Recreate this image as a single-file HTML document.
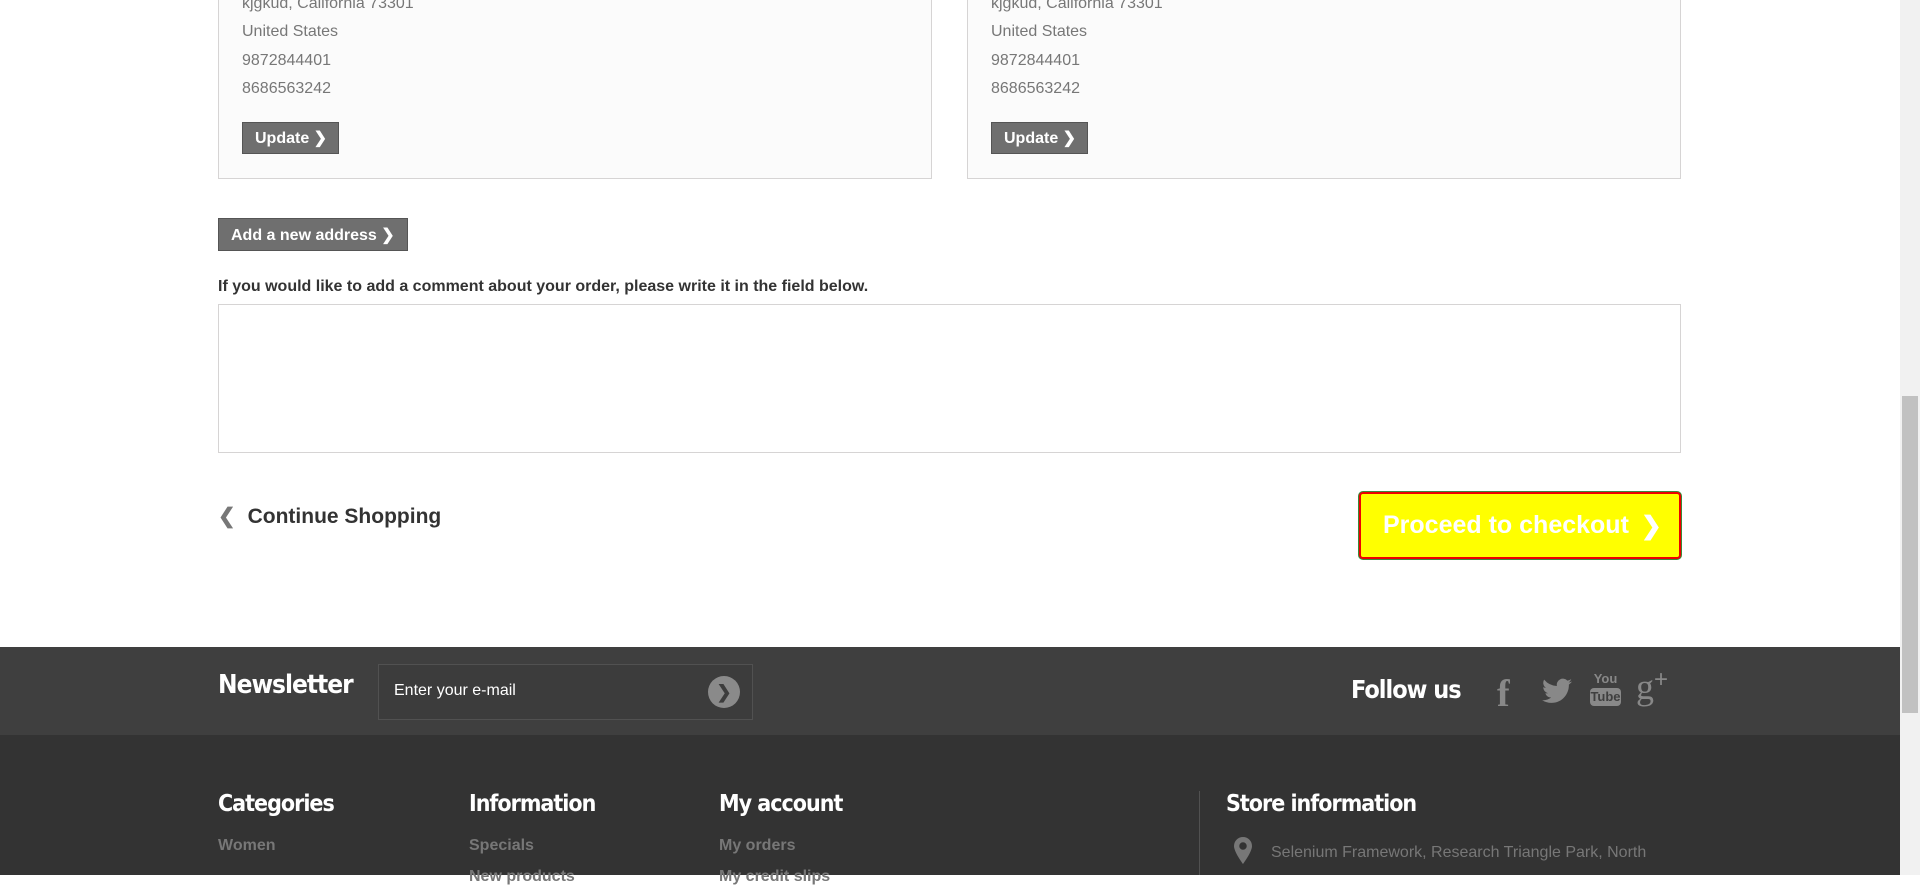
<!DOCTYPE html>
<html><head><meta charset="utf-8"><style>
*{margin:0;padding:0;box-sizing:border-box}
body{width:1920px;height:875px;overflow:hidden;background:#fff;font-family:"Liberation Sans",Arial,sans-serif;position:relative}
.a{position:absolute}
.box{position:absolute;top:-20px;height:199px;width:714px;background:#fbfbfb;border:1px solid #d6d4d4}
.box .t{position:absolute;left:23px;font-size:16px;color:#777}
.btn{position:absolute;background:#6f6f6f;border:1px solid #555;color:#fff;font-weight:bold;font-size:16px;display:flex;align-items:center;padding-left:12px}
.ft{font-family:"DejaVu Sans Condensed","Liberation Sans Narrow","Liberation Sans",sans-serif;color:#fff;font-weight:bold;letter-spacing:-1px}
.lnk{font-weight:bold;color:#777;font-size:16px}
</style></head><body>
<div class="box" style="left:218px">
 <div class="t" style="top:14px">kjgkud, California 73301</div>
 <div class="t" style="top:42px">United States</div>
 <div class="t" style="top:71px">9872844401</div>
 <div class="t" style="top:99px">8686563242</div>
 <div class="btn" style="left:23px;top:141px;width:97px;height:32px">Update &#x276F;</div>
</div>
<div class="box" style="left:967px">
 <div class="t" style="top:14px">kjgkud, California 73301</div>
 <div class="t" style="top:42px">United States</div>
 <div class="t" style="top:71px">9872844401</div>
 <div class="t" style="top:99px">8686563242</div>
 <div class="btn" style="left:23px;top:141px;width:97px;height:32px">Update &#x276F;</div>
</div>
<div class="btn" style="left:218px;top:218px;width:190px;height:33px">Add a new address &#x276F;</div>
<div class="a" style="left:218px;top:278px;font-size:16px;font-weight:bold;color:#333">If you would like to add a comment about your order, please write it in the field below.</div>
<div class="a" style="left:218px;top:304px;width:1463px;height:149px;border:1px solid #d6d4d4"></div>
<div class="a" style="left:218px;top:504px;font-size:21px;font-weight:bold;color:#333"><span style="color:#777;margin-right:12px">&#x276E;</span>Continue Shopping</div>
<div class="a" style="left:1359px;top:492px;width:322px;height:67px;background:#ff0;border:2px solid #e00;border-radius:4px;box-shadow:0 0 0 1px #3a8a3a;color:#fff;font-weight:bold;font-size:25px;display:flex;align-items:center;padding-left:22px">Proceed to checkout <span style="margin-left:12px">&#x276F;</span></div>

<div class="a" style="left:0;top:647px;width:1900px;height:88px;background:#3f3f3f"></div>
<div class="a" style="left:0;top:735px;width:1900px;height:140px;background:#333"></div>
<div class="a ft" style="left:218px;top:670px;font-size:26px">Newsletter</div>
<div class="a" style="left:378px;top:664px;width:375px;height:56px;background:#3c3c3c;border:1px solid #515151"></div>
<div class="a" style="left:394px;top:682px;font-size:16px;color:#fff">Enter your e-mail</div>
<div class="a" style="left:708px;top:676px;width:32px;height:32px;border-radius:50%;background:#8a8a8a;color:#3c3c3c;font-weight:bold;font-size:18px;text-align:center;line-height:32px">&#x276F;</div>
<div class="a ft" style="left:1351px;top:675px;font-size:25px">Follow us</div>
<div class="a" style="left:1497px;top:672px;font-size:38px;font-weight:bold;color:#888;font-family:'Liberation Serif',serif">f</div>
<svg class="a" style="left:1542px;top:678px" width="30" height="26" viewBox="0 0 24 20"><path fill="#888" d="M24 2.4c-.9.4-1.8.6-2.8.8 1-.6 1.8-1.6 2.2-2.7-1 .6-2 1-3.1 1.2A4.9 4.9 0 0 0 11.9 6 14 14 0 0 1 1.7.9a4.9 4.9 0 0 0 1.5 6.6c-.8 0-1.6-.3-2.200-.6 0 2.4 1.7 4.4 3.9 4.8-.7.2-1.5.2-2.2.1.6 2 2.4 3.4 4.6 3.4A9.9 9.9 0 0 1 0 17.3 14 14 0 0 0 7.5 19.5c9.1 0 14-7.5 14-14v-.6c1-.7 1.8-1.6 2.5-2.5z"/></svg>
<div class="a" style="left:1590px;top:672px;width:31px;height:36px;color:#888;font-size:13px;font-weight:bold;text-align:center;line-height:14px">You<div style="background:#888;color:#3f3f3f;border-radius:4px;margin-top:2px;height:18px;line-height:18px">Tube</div></div>
<div class="a" style="left:1636px;top:666px;font-size:36px;color:#888;font-family:'Liberation Serif',serif">g<span style="font-size:24px;vertical-align:top;font-family:'Liberation Sans'">+</span></div>

<div class="a ft" style="left:218px;top:791px;font-size:23px">Categories</div>
<div class="a ft" style="left:469px;top:791px;font-size:23px">Information</div>
<div class="a ft" style="left:719px;top:791px;font-size:23px">My account</div>
<div class="a ft" style="left:1226px;top:791px;font-size:23px">Store information</div>
<div class="a" style="left:1199px;top:791px;width:1px;height:84px;background:#515151"></div>
<div class="a lnk" style="left:218px;top:837px">Women</div>
<div class="a lnk" style="left:469px;top:837px">Specials</div>
<div class="a lnk" style="left:719px;top:837px">My orders</div>
<div class="a lnk" style="left:469px;top:868px">New products</div>
<div class="a lnk" style="left:719px;top:868px">My credit slips</div>
<svg class="a" style="left:1234px;top:837px" width="18" height="27" viewBox="0 0 12 18"><path fill="#777" d="M6 0a6 6 0 0 0-6 6c0 4 6 12 6 12s6-8 6-12a6 6 0 0 0-6-6zm0 8.5a2.5 2.5 0 1 1 0-5 2.5 2.5 0 0 1 0 5z"/></svg>
<div class="a" style="left:1271px;top:844px;font-size:16px;color:#777">Selenium Framework, Research Triangle Park, North</div>

<div class="a" style="left:1900px;top:0;width:20px;height:875px;background:#f1f1f1"></div>
<div class="a" style="left:1902px;top:396px;width:16px;height:317px;background:#c1c1c1"></div>
</body></html>
